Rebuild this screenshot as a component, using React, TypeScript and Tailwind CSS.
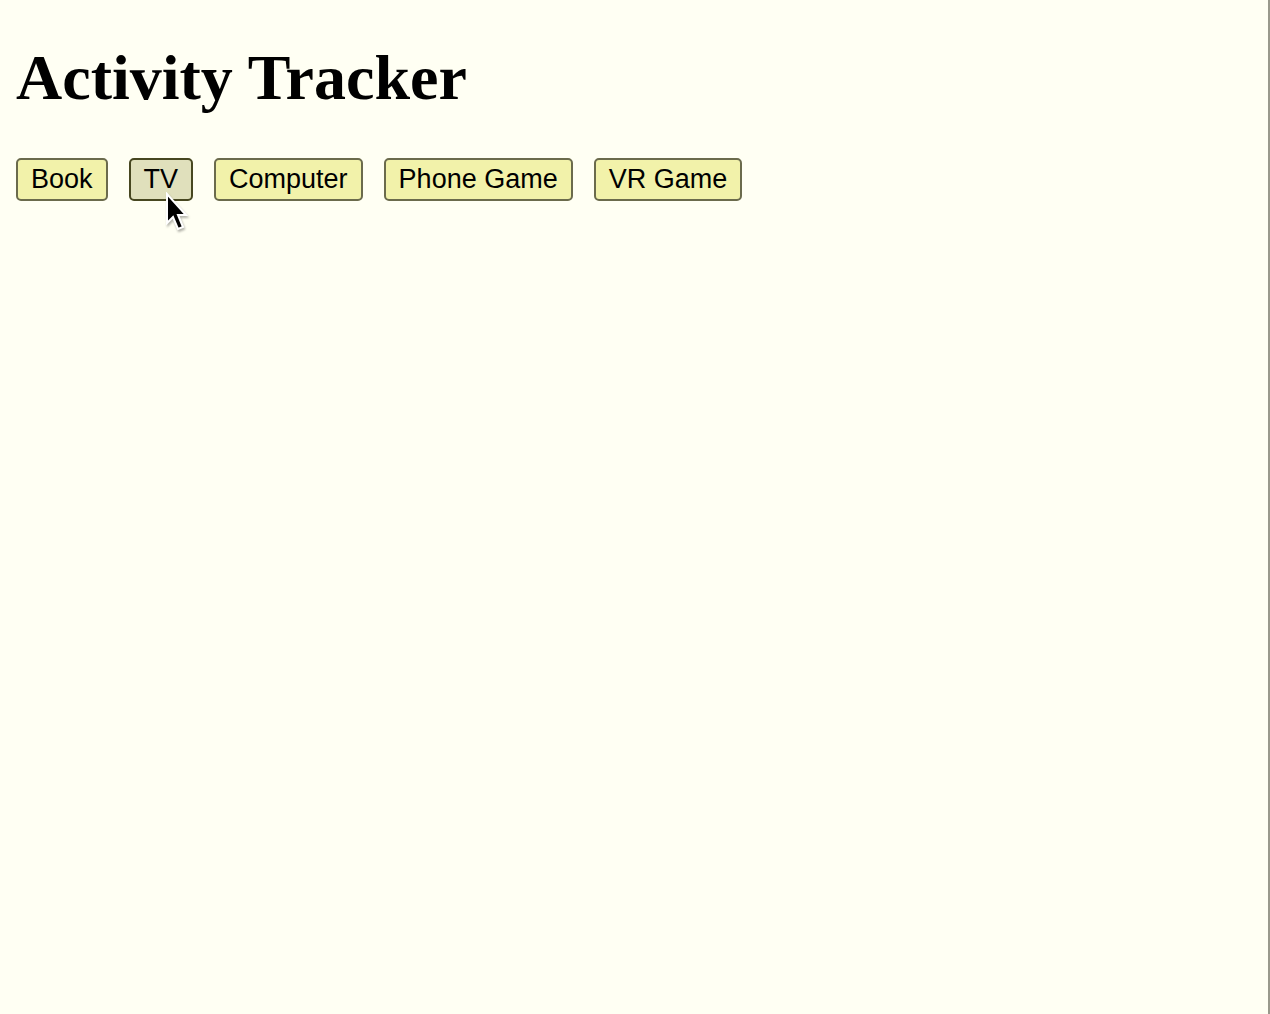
const activities = ["Book", "TV", "Computer", "Phone Game", "VR Game"];

export default function App() {
  return (
    <main className="min-h-screen border-r-2 border-[#99998c] bg-[#fffff3] px-4 pt-10 text-black">
      <h1 className="font-['Liberation_Serif',serif] text-[64px] leading-[76px] font-bold">Activity Tracker</h1>
      <div className="mt-[42px] flex flex-wrap gap-[21px] font-['Liberation_Sans',sans-serif]">
        {activities.map((name) => (
          <div key={name} className="relative">
            <button
              type="button"
              className={
                name === "TV"
                  ? "block rounded-[5px] border-2 border-[#474720] bg-[#e0e0bc] px-[13px] pt-1 pb-[5px] text-[27px] leading-[30px]"
                  : "block rounded-[5px] border-2 border-[#6b6b4c] bg-[#f2f2aa] px-[13px] pt-1 pb-[5px] text-[27px] leading-[30px]"
              }
            >
              {name}
            </button>
            {name === "TV" && (
              <svg className="pointer-events-none absolute top-[34px] left-9 drop-shadow-[1px_2px_1px_rgba(0,0,0,0.3)]" width="24" height="40" viewBox="0 0 24 40" aria-hidden="true">
                <path d="M2 2v29l6-6 5 12 5-2-5-12h8z" fill="black" stroke="white" strokeWidth="2" />
              </svg>
            )}
          </div>
        ))}
      </div>
    </main>
  );
}
